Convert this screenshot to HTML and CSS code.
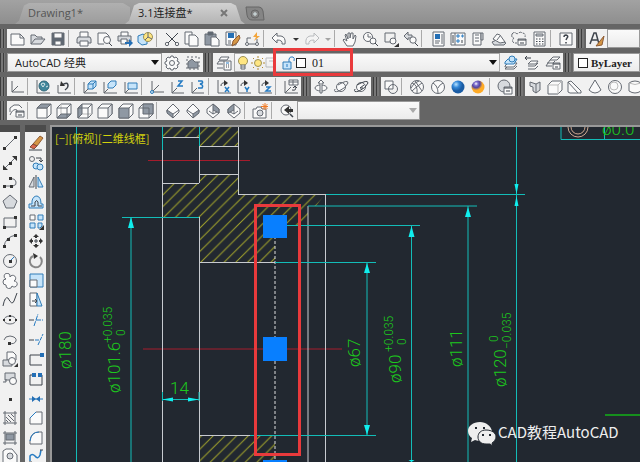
FILE: index.html
```html
<!DOCTYPE html>
<html lang="zh-CN">
<head>
<meta charset="utf-8">
<title>AutoCAD</title>
<link rel="stylesheet" href="styles.css">
</head>
<body>
<nav class="tabs">
<a class="tab" href="#drawing1">Drawing1*</a>
<a class="tab active" href="#plate"><span>3.1连接盘*</span><svg class="close" viewBox="0 0 8 8"><path d="M1 1l6 6M7 1l-6 6"/></svg></a>
<button class="add" aria-label="New tab"><svg viewBox="0 0 20 16"><path d="M1 1H14Q17 1 18 5L19 14H7Q3 14 2 9Z"/><circle cx="10" cy="8" r="4"/><path class="w" d="M10 6v4M8 8h4"/></svg></button>
</nav>
<header class="bars">
<div class="row">
<i class="grip"></i>
<div class="bar standard">
<button aria-label="New"><svg viewBox="0 0 16 16"><path class="p" d="M2 3H11L15 7V14H2Z"/><path d="M11 3V7H15"/></svg></button>
<button aria-label="Open"><svg viewBox="0 0 16 16"><path class="g" d="M1 13V4H5L7 6H12V8"/><path class="g" d="M1 13L5 8H15L11 13Z"/></svg></button>
<button aria-label="Save"><svg viewBox="0 0 16 16"><path class="d" d="M2 2H14V14H2Z"/><path class="p" d="M4 2H12V7H4Z"/><path class="p" d="M5 10H11V14H5Z"/></svg></button>
<i class="sep"></i>
<button aria-label="Plot"><svg viewBox="0 0 16 16"><path class="p" d="M4 6V1H12V6"/><path class="g" d="M2 6H14L15 8V12H1V8Z"/><path class="p" d="M4 10H12V15H4Z"/></svg></button>
<button aria-label="Preview"><svg viewBox="0 0 16 16"><path class="p" d="M7 13H1V2H9L12 5V7"/><circle class="p" cx="10" cy="9" r="3.5"/><path class="h" d="M12 12l3 3"/></svg></button>
<button aria-label="Publish"><svg viewBox="0 0 16 16"><path class="p" d="M4 5V1H11V5"/><path class="g" d="M1 5H14V10H1Z"/><path class="p" d="M4 8H10V13H4Z"/><path class="bf" d="M8 11h4V8l4 4-4 4v-3H8Z"/></svg></button>
<button aria-label="3D print"><svg viewBox="0 0 16 16"><path class="l" d="M1 5L6 3L10 6V13L5 14L1 11Z"/><circle class="y" cx="11" cy="6" r="4.5"/><path d="M11 1.500V6L15 8M11 6L8 9"/></svg></button>
<i class="sep"></i>
<button aria-label="Cut"><svg viewBox="0 0 16 16"><path class="h" d="M2 2L12 12M14 2L4 12"/><circle cx="3" cy="13" r="1.700"/><circle cx="13" cy="13" r="1.700"/></svg></button>
<button aria-label="Copy"><svg viewBox="0 0 16 16"><path class="p" d="M1 1H8V13H1Z"/><path class="p" d="M5 4H11L14 7V15H5Z"/></svg></button>
<button aria-label="Paste"><svg viewBox="0 0 16 16"><path class="m" d="M1 3H12V14H1Z"/><path class="d" d="M4 1H9V4H4Z"/><path class="p" d="M7 6H12L15 9V15H7Z"/></svg></button>
<button aria-label="Match properties"><svg viewBox="0 0 16 16"><path class="p" d="M1 1H11V14H1Z"/><path class="bf" d="M3 2H9V7H3Z"/><path d="M3 10H6M3 12H6"/><path class="o" d="M14 4L15 7L12 12L7 15L8 10Z"/></svg></button>
<button aria-label="Block editor"><svg viewBox="0 0 16 16"><path d="M2 7V13H12V8M2 7H6"/><circle class="p" cx="2" cy="13" r="1.500"/><circle class="p" cx="12" cy="13" r="1.500"/><path class="spark" d="M12 1L8 6H11L9 10L15 5H12Z"/></svg></button>
<i class="sep"></i>
<button aria-label="Undo"><svg viewBox="0 0 16 16"><path class="p" d="M1 7L6 2V5H10Q15 6 14 13H11Q12 9 6 9V12Z"/></svg></button>
<button class="drop" aria-label="Undo list"><svg viewBox="0 0 8 16"><path class="k" d="M1 7H7L4 10Z"/></svg></button>
<button class="off" aria-label="Redo"><svg viewBox="0 0 16 16"><path class="p" d="M15 7L10 2V5H6Q1 6 2 13H5Q4 9 10 9V12Z"/></svg></button>
<button class="drop off" aria-label="Redo list"><svg viewBox="0 0 8 16"><path class="k" d="M1 7H7L4 10Z"/></svg></button>
<i class="sep"></i>
<button aria-label="Pan"><svg viewBox="0 0 16 16"><path class="p" d="M5 15L1 9L2 8L5 10L3 4L4 3L6 8V2H8V7L9 2H11V8L13 4L14 5L13 11L11 15Z"/></svg></button>
<button aria-label="Zoom realtime"><svg viewBox="0 0 16 16"><circle class="p" cx="5" cy="6" r="4.500"/><path d="M5 3V6H8"/><circle class="p" cx="10" cy="10" r="3"/><path class="h" d="M12 12l3 3"/></svg></button>
<button aria-label="Zoom window"><svg viewBox="0 0 16 16"><path d="M2 2H12V11H2Z"/><circle class="p" cx="10" cy="10" r="3"/><path class="k" d="M16 12V16H11Z"/></svg></button>
<button aria-label="Zoom previous"><svg viewBox="0 0 16 16"><path class="g" d="M1 5L5 1V4H9V7H5V9Z"/><circle class="p" cx="10" cy="9" r="3.200"/><path class="h" d="M12 12l3 3"/></svg></button>
<i class="sep"></i>
<button aria-label="Properties"><svg viewBox="0 0 16 16"><path class="p" d="M3 1H14V15H3Z"/><path class="bf" d="M5 3H10V8H5Z"/><path d="M5 10H10M5 12H9M12 3V13"/></svg></button>
<button aria-label="DesignCenter"><svg viewBox="0 0 16 16"><path class="p" d="M1 2H15V14H1ZM5 2V14"/><path class="b" d="M7 4H9V6H7ZM12 4H13V6H12ZM7 9H9V11H7Z"/><path class="h" d="M3 4V12M12 9V12"/></svg></button>
<button aria-label="Tool palettes"><svg viewBox="0 0 16 16"><path class="p" d="M3 2H11V14H3Z"/><path class="g" d="M11 2H13V9H11Z"/><path d="M5 4H9M5 7H9M5 10H9"/></svg></button>
<button aria-label="Sheet set"><svg viewBox="0 0 16 16"><path class="g" d="M1 11L8 8L15 12L13 14H3Z"/><path class="p" d="M2 8L6 3L9 4L14 11L9 12Z"/><path d="M9 5L6 9"/></svg></button>
<button aria-label="Markup set"><svg viewBox="0 0 16 16"><path stroke-dasharray="3 1" d="M1 3Q3 0 6 3Q10 0 11 2Q15 2 14 6M1 3Q0 7 3 7Q0 10 3 12H6"/><path class="p" d="M7 8H15V14H7Z"/><path class="h" d="M7 9H15M9 12H13"/></svg></button>
<button aria-label="Calculator"><svg viewBox="0 0 16 16"><path class="p" d="M3 1H14V15H3Z"/><path class="g" d="M5 3H12V5H5Z"/><path class="h" stroke-dasharray="1.500 1.500" d="M5 8H13M5 10.500H13M5 13H13"/></svg></button>
<i class="sep"></i>
<button aria-label="Help"><svg viewBox="0 0 16 16"><path class="p" d="M2 2H14V14H2Z"/><path class="h thick" d="M6 6Q6 4 8 4Q11 5 9 7L8 9M8 11V12.500"/></svg></button>
</div>
<i class="grip"></i>
<div class="bar one"><button aria-label="Text style"><svg viewBox="0 0 16 16"><path class="h thick" d="M1 13L5 2H7L10 13M3 9H9"/><path class="o" d="M15 5L11 10L7 15L13 14Z"/></svg></button></div>
<select class="field grow" aria-label="Text style name"><option></option></select>
</div>

<div class="row">
<i class="grip"></i>
<div class="bar workspace">
<div class="combo"><select aria-label="Workspace"><option>AutoCAD 经典</option></select><svg class="arrow" viewBox="0 0 8 5"><path d="M0 0H8L4 5Z"/></svg></div>
<button aria-label="Workspace settings"><svg viewBox="0 0 16 16"><path class="p" d="M7 1H9L10 3L12 2L14 4L13 6L15 7V9L13 10L14 12L12 14L10 13L9 15H7L6 13L4 14L2 12L3 10L1 9V7L3 6L2 4L4 2L6 3Z"/><circle cx="8" cy="8" r="2.500"/></svg></button>
<button aria-label="My workspace"><svg viewBox="0 0 16 16"><path stroke-dasharray="2 2" d="M2 2H14V14H2Z"/><path class="m" d="M3 13V7L7 4L10 7H13V13Z"/></svg></button>
</div>
<i class="grip"></i>
<div class="bar layers">
<button aria-label="Layer properties"><svg viewBox="0 0 16 16"><path class="p" d="M5 2H13L11 5H3ZM3 6H8M1 9H7M1 13H7M3 6L1 9"/><path class="p" d="M8 6H15V15H8Z"/><path class="b" d="M10 8H13"/><path class="h" stroke-dasharray="1 1" d="M10 10H14M10 12H14"/></svg></button>
<div class="combo layer">
<svg viewBox="0 0 16 16"><circle class="y" cx="8" cy="6" r="4.500"/><path class="p" d="M6 10H10V14H6ZM6 12H10"/></svg>
<svg viewBox="0 0 16 16"><circle class="y" cx="8" cy="8" r="3.500"/><path class="gold" d="M8 1V3M8 13V15M1 8H3M13 8H15M3 3L4 4M12 12L13 13M3 13L4 12M12 4L13 3"/></svg>
<svg class="off half" viewBox="0 0 8 16"><path d="M8 3H1V12H8M4 6H8"/></svg>
<svg viewBox="0 0 16 16"><path class="l" d="M2 7H10V14H2Z"/><path class="b" d="M8 7V4Q9 1 12 2Q14 3 13 6M6 9V12"/></svg>
<b class="swatch"></b>
<select class="serif" aria-label="Layer"><option>01</option></select><svg class="arrow" viewBox="0 0 8 5"><path d="M0 0H8L4 5Z"/></svg>
<span class="mark"></span>
</div>
<button aria-label="Make current"><svg viewBox="0 0 16 16"><path class="p" d="M2 11L5 8H14L11 12H2ZM2 14L4 12M2 14H11L14 11"/><path class="l" d="M2 7L5 4H14L11 9H2Z"/><circle class="l" cx="9" cy="4" r="3"/></svg></button>
<button aria-label="Layer previous"><svg viewBox="0 0 16 16"><path class="p" d="M5 8L7 6H14L12 9H4ZM4 11H11L14 8M4 14H11L14 11"/><path class="h" d="M1 3H7M3 1L1 3L3 5"/></svg></button>
<button aria-label="Layer states"><svg viewBox="0 0 16 16"><path class="p" d="M5 5L8 2H15L12 5ZM2 8H8L10 6M1 11H7M5 5L1 11"/><path class="p" d="M8 8H15V14H8Z"/><path class="h" d="M8 9H15M10 12H13"/></svg></button>
</div>
<i class="grip"></i>
<div class="combo grow color"><b class="swatch"></b><select class="serif bold" aria-label="Color"><option>ByLayer</option></select></div>
</div>

<div class="row">
<i class="grip"></i>
<div class="bar ucs">
<button aria-label="UCS"><svg viewBox="0 0 16 16"><path class="a" d="M3 2V13H15M3 13L9 7"/></svg></button>
<i class="sep"></i>
<button aria-label="World"><svg viewBox="0 0 16 16"><path class="a" d="M2 1V14H15"/><circle class="globe" cx="9" cy="7" r="5"/><path class="w" d="M6 5Q8 3 10 5L8 8ZM11 8L13 7"/></svg></button>
<button aria-label="UCS previous"><svg viewBox="0 0 16 16"><path class="a" d="M2 6V14H15"/><path class="h thick" d="M6 6Q12 2 12 7Q12 9 9 11"/><path class="k" d="M4 7L5 2L9 7Z"/></svg></button>
<i class="sep"></i>
<button aria-label="Face UCS"><svg viewBox="0 0 16 16"><path class="a" d="M2 3V14H15M2 14L6 10"/><path class="l" d="M6 5L9 2H14V7L11 10H6ZM6 5H11V10M11 5L14 2"/></svg></button>
<button aria-label="Object UCS"><svg viewBox="0 0 16 16"><path class="a" d="M2 3V14H15M2 14L6 10"/><path class="l" d="M6 5L9 2H14V6L11 9H6Z"/></svg></button>
<button aria-label="View UCS"><svg viewBox="0 0 16 16"><path class="a" d="M2 3V14H15M2 14L6 10"/><path class="l" d="M5 4H14V10H5Z"/></svg></button>
<i class="sep"></i>
<button aria-label="Origin"><svg viewBox="0 0 16 16"><path class="a" d="M3 2V13H15M3 13L10 6"/><circle class="l" cx="3" cy="13" r="1.500"/></svg></button>
<button aria-label="Z axis"><svg viewBox="0 0 16 16"><path class="a" d="M3 3V14H15M3 14L8 9"/><path class="b thick" d="M9 2H13L9 7H14"/></svg></button>
<button aria-label="3 point"><svg viewBox="0 0 16 16"><path class="a" d="M2 3V14H14M2 14L7 9"/><path class="b thick" d="M8 2H12Q14 4 10 5Q14 6 12 9H8"/></svg></button>
<i class="sep"></i>
<button aria-label="Rotate X"><svg viewBox="0 0 16 16"><path class="a" d="M2 1V14H15"/><path class="h" d="M5 7Q5 3 10 4"/><path class="k" d="M8 1L12 4L8 7Z"/><path class="b thick" d="M9 8L13 13M13 8L9 13"/></svg></button>
<button aria-label="Rotate Y"><svg viewBox="0 0 16 16"><path class="a" d="M2 1V14H15"/><path class="h" d="M5 7Q5 3 10 4"/><path class="k" d="M8 1L12 4L8 7Z"/><path class="b thick" d="M9 8L11 11L13 8M11 11V13"/></svg></button>
<button aria-label="Rotate Z"><svg viewBox="0 0 16 16"><path class="a" d="M2 1V14H15"/><path class="h" d="M5 7Q5 3 10 4"/><path class="k" d="M8 1L12 4L8 7Z"/><path class="b thick" d="M9 8H13L9 12H14"/></svg></button>
<i class="sep"></i>
<button aria-label="Apply"><svg viewBox="0 0 16 16"><path class="a" d="M2 2V14H15M2 14L8 8"/><path class="p" d="M6 1H15V6H6ZM10 1V6M6 3H15"/><path class="h" d="M9 11Q14 12 12 8M10 9L12 7L14 9"/></svg></button>
</div>
<i class="grip"></i>
<div class="bar orbit">
<button aria-label="Constrained orbit"><svg viewBox="0 0 16 16"><ellipse class="p" cx="8" cy="9" rx="6" ry="3"/><path class="p" d="M7 14V4H5L8 1L11 4H9V14Z"/></svg></button>
<button aria-label="Free orbit"><svg viewBox="0 0 16 16"><circle class="p" cx="8" cy="8" r="4.500"/><path d="M5 6Q15 0 15 4Q13 9 6 12Q0 14 2 10"/></svg></button>
<button aria-label="Continuous orbit"><svg viewBox="0 0 16 16"><circle class="p" cx="8" cy="8" r="4.500"/><path class="h" d="M4 6Q15 0 15 4Q13 9 6 12Q0 14 2 10M7 9L11 6M7 9h3"/></svg></button>
</div>
<i class="grip"></i>
<div class="bar styles">
<button aria-label="2D wireframe"><svg viewBox="0 0 16 16"><path class="p" d="M2 2H10V10H2Z"/><circle cx="10" cy="10" r="4.500"/></svg></button>
<i class="sep"></i>
<button aria-label="3D wireframe"><svg viewBox="0 0 16 16"><circle class="p" cx="8" cy="8" r="6.500"/><path d="M3 4Q9 6 8 14M13 4Q8 7 3 12M2 9Q5 3 10 2M13 12Q9 6 6 2"/></svg></button>
<button aria-label="3D hidden"><svg viewBox="0 0 16 16"><circle class="p" cx="8" cy="8" r="6.500"/><path d="M3 4Q8 7 8 14M13 4Q9 6 8 9"/></svg></button>
<button aria-label="Realistic"><svg viewBox="0 0 16 16"><defs><radialGradient id="blue" cx=".35" cy=".3"><stop offset="0" stop-color="#b7e2ff"/><stop offset=".5" stop-color="#3387d8"/><stop offset="1" stop-color="#1a5ca4"/></radialGradient><radialGradient id="sunset" cx=".35" cy=".25"><stop offset="0" stop-color="#fff"/><stop offset=".3" stop-color="#8070cf"/><stop offset=".6" stop-color="#5346a0"/><stop offset="1" stop-color="#ffab26"/></radialGradient></defs><circle class="ball" cx="8" cy="8" r="6.500" fill="url(#blue)"/></svg></button>
<button aria-label="Conceptual"><svg viewBox="0 0 16 16"><circle class="ball" cx="8" cy="8" r="6.500" fill="url(#sunset)"/></svg></button>
<i class="sep"></i>
<button aria-label="Manage visual styles"><svg viewBox="0 0 16 16"><circle class="g" cx="7" cy="7" r="6"/><path class="p" d="M7 8H15V15H7Z"/><path class="h" d="M7 9H15M9 12H13"/></svg></button>
</div>
<i class="grip"></i>
<div class="bar solids">
<button aria-label="Polysolid"><svg viewBox="0 0 16 16"><path class="g" d="M3 3L9 5V14L6 12V8L3 7ZM9 5L13 3V11L9 14"/></svg></button>
<button aria-label="Box"><svg viewBox="0 0 16 16"><path class="p" d="M1 6L5 2H15V11L11 15H1Z"/><path class="lt" d="M1 6H11V15M11 6L15 2"/></svg></button>
<button aria-label="Wedge"><svg viewBox="0 0 16 16"><path class="p" d="M1 13V3L4 2L14 12V14H3Z"/><path d="M1 3L11 14"/></svg></button>
<button aria-label="Cone"><svg viewBox="0 0 16 16"><path class="p" d="M8 1L14 11Q8 17 2 11Z"/></svg></button>
<button aria-label="Sphere"><svg viewBox="0 0 16 16"><circle class="p" cx="8" cy="8" r="6.500"/><circle class="lt" cx="7" cy="7" r="4"/></svg></button>
<button aria-label="Cylinder"><svg viewBox="0 0 16 16"><path class="p" d="M2 4Q8 0 14 4V12Q8 16 2 12Z"/><path class="lt" d="M2 4Q8 7 14 4"/></svg></button>
</div>
</div>

<div class="row">
<i class="grip"></i>
<div class="bar views">
<button aria-label="Named views"><svg viewBox="0 0 16 16"><path class="p" d="M1 9V5L5 2H10L13 5M1 12Q4 5 8 7V12"/><path class="p" d="M7 8H15V14H7Z"/><path class="h" d="M7 9H15M9 12H13"/></svg></button>
<i class="sep"></i>
<button aria-label="Top"><svg viewBox="0 0 16 16"><path class="p" d="M1 5H11V15H1ZM11 5L15 1V11L11 15"/><path class="m" d="M1 5L5 1H15L11 5Z"/></svg></button>
<button aria-label="Bottom"><svg viewBox="0 0 16 16"><path class="p" d="M1 5L5 1H15V11L11 15H1Z"/><path class="lt" d="M5 1V11"/><path class="m" d="M1 15L5 11H15L11 15Z"/><path d="M1 5H11V15M11 5L15 1"/></svg></button>
<button aria-label="Left"><svg viewBox="0 0 16 16"><path class="p" d="M1 5L5 1H15V11L11 15H1Z"/><path class="lt" d="M5 11H15"/><path class="m" d="M1 5L5 1V11L1 15Z"/><path d="M1 5H11V15M11 5L15 1"/></svg></button>
<button aria-label="Right"><svg viewBox="0 0 16 16"><path class="p" d="M1 5L5 1H15V11L11 15H1ZM1 5H11"/><path class="g" d="M11 5L15 1V11L11 15Z"/></svg></button>
<button aria-label="Front"><svg viewBox="0 0 16 16"><path class="p" d="M1 5L5 1H15V11L11 15H1Z"/><path d="M11 5L15 1"/><path class="m" d="M1 5H11V15H1Z"/></svg></button>
<button aria-label="Back"><svg viewBox="0 0 16 16"><path class="p" d="M1 5L5 1H15V11L11 15H1Z"/><path class="m" d="M5 1H15V11H5Z"/><path d="M1 5H11V15"/></svg></button>
<i class="sep"></i>
<button aria-label="SW isometric"><svg viewBox="0 0 16 16"><path class="p" d="M2 7L8 1L14 7V9L8 15L2 9Z"/><path class="m" d="M2 7L8 11V15L2 10Z"/><path d="M8 11L14 7"/></svg></button>
<button aria-label="SE isometric"><svg viewBox="0 0 16 16"><path class="p" d="M2 7L8 1L14 7V9L8 15L2 9Z"/><path class="m" d="M14 7L8 11V15L14 10Z"/><path d="M8 11L2 7"/></svg></button>
<button aria-label="NE isometric"><svg viewBox="0 0 16 16"><path class="p" d="M2 6L8 1L14 6V10L8 15L2 10Z"/><path class="m" d="M8 1L14 6V10L8 7Z"/><path d="M8 7V11L4 8M8 11L12 9"/></svg></button>
<button aria-label="NW isometric"><svg viewBox="0 0 16 16"><path class="p" d="M2 6L8 1L14 6V10L8 15L2 10Z"/><path class="m" d="M8 1L2 6V10L8 7Z"/><path d="M8 7V11L12 8M8 11L4 9"/></svg></button>
<i class="sep"></i>
<button aria-label="Create camera"><svg viewBox="0 0 16 16"><path class="p" d="M1 6H4L5 4H9L10 6H14V15H1Z"/><circle class="g" cx="8" cy="10" r="3"/><path class="orange" d="M13 0V7M9 3.500H16M10.500 1L15.500 6M15.500 1L10.500 6"/></svg></button>
<i class="sep"></i>
<button aria-label="Zoom back"><svg viewBox="0 0 16 16"><circle class="p" cx="7" cy="7" r="5"/><path class="h thick" d="M11 11l3 3"/><path class="k" d="M5 7L10 3V6H14V9H10V11Z"/></svg></button>
</div>
<div class="combo named"><select disabled aria-label="View"><option></option></select><svg class="arrow" viewBox="0 0 8 5"><path d="M0 0H8L4 5Z"/></svg></div>
</div>
</header>

<main>
<aside class="tools">
<button aria-label="Line"><svg viewBox="0 0 16 16"><path d="M2 14L14 2"/><path class="k" d="M1 12h3v3H1zM12 1h3v3h-3z"/></svg></button>
<button aria-label="Construction line"><svg viewBox="0 0 16 16"><path d="M2 14L14 2"/><path class="k" d="M1 15V10L6 15ZM15 1V6L10 1ZM7 7h3v3H7z"/></svg></button>
<button aria-label="Polyline"><svg viewBox="0 0 16 16"><path d="M2 12H11Q15 11 14 8Q13 4 8 5"/><path class="k" d="M1 11h3v3H1zM8 11h3v3H8zM7 3h3v3H7z"/></svg></button>
<button aria-label="Polygon"><svg viewBox="0 0 16 16"><path class="g" d="M8 1L15 7L12 14H4L1 7Z"/></svg></button>
<button aria-label="Rectangle"><svg viewBox="0 0 16 16"><path d="M2 4H14V13H2Z"/><path class="k" d="M1 12h3v3H1zM12 2h3v3h-3z"/></svg></button>
<button aria-label="Arc"><svg viewBox="0 0 16 16"><path d="M2 14Q3 4 14 2"/><path class="k" d="M1 12h3v3H1zM5 5h3v3H5zM12 1h3v3h-3z"/></svg></button>
<button aria-label="Circle"><svg viewBox="0 0 16 16"><circle cx="8" cy="8" r="6.500"/><path class="b" d="M8 8L12 4"/><path class="k" d="M7 7h3v3H7z"/></svg></button>
<button aria-label="Revision cloud"><svg viewBox="0 0 16 16"><path class="p" d="M4 6A3 3 0 1 1 8 4A3 3 0 1 1 12 8A3 3 0 1 1 10 13A3 3 0 1 1 4 12A3 3 0 1 1 4 6Z"/></svg></button>
<button aria-label="Spline"><svg viewBox="0 0 16 16"><path class="h" d="M1 14Q3 4 6 6Q10 14 12 9L15 1"/></svg></button>
<button aria-label="Ellipse"><svg viewBox="0 0 16 16"><ellipse cx="8" cy="8" rx="6" ry="4"/><path class="k" d="M7 7h2v2H7zM1 7h2v2H1zM7 3h2v2H7zM13 7h2v2h-2z"/></svg></button>
<button aria-label="Ellipse arc"><svg viewBox="0 0 16 16"><path d="M2 8Q3 4 8 4Q15 5 14 9Q12 13 7 11"/><path class="k" d="M6 10h3v3H6z"/></svg></button>
<button aria-label="Insert block"><svg viewBox="0 0 16 16"><path class="p" d="M5 1H11L14 4V9H5Z"/><path class="g" d="M1 9H10V15H1Z"/><circle class="p" cx="10" cy="10" r="3.500"/><path class="k" d="M16 12V16H12Z"/></svg></button>
<button aria-label="Make block"><svg viewBox="0 0 16 16"><path class="g" d="M3 2H13V9H3ZM1 11H4V8"/><circle class="p" cx="11" cy="10" r="3.500"/></svg></button>
<button aria-label="Point"><svg viewBox="0 0 16 16"><path class="k" d="M7 7h3v3H7z"/></svg></button>
<button aria-label="Hatch"><svg viewBox="0 0 16 16"><path d="M3 1V15M13 1V15M1 3H15M1 13H15"/><path d="M4 7L9 12M6 5L12 11M4 10L6 12M9 4L12 7"/></svg></button>
<button aria-label="Gradient"><svg viewBox="0 0 16 16"><path class="m" d="M4 4H12V10H4Z"/><path d="M3 1V15M13 1V15M1 3H15M1 13H15"/></svg></button>
<button aria-label="Region"><svg viewBox="0 0 16 16"><path class="p" d="M1 15V3L4 1H10L15 7V15"/><circle class="g" cx="8" cy="8" r="3"/></svg></button>
</aside>
<aside class="tools modify">
<button aria-label="Erase"><svg viewBox="0 0 16 16"><path class="o" d="M5 9L12 1L15 3L9 11Z"/><path class="redf" d="M2 12L5 9L9 11L6 14Z"/><path class="h" d="M1 15H14"/></svg></button>
<button aria-label="Copy object"><svg viewBox="0 0 16 16"><circle cx="4" cy="4" r="2.500"/><path class="h" d="M8 3H13V6M11 5L13 7L15 5"/><circle class="l" cx="8" cy="11" r="3"/><circle class="l" cx="12" cy="12" r="3"/></svg></button>
<button aria-label="Mirror"><svg viewBox="0 0 16 16"><path class="g" d="M6 3V13H1Z"/><path class="h" d="M8 1V15"/><path class="l" d="M10 3V13H15Z"/></svg></button>
<button aria-label="Offset"><svg viewBox="0 0 16 16"><path class="l" d="M1 14V10H4V7Q5 2 9 2Q13 3 13 10H15V14Z"/><path class="h" d="M3 12H7V8Q9 5 10 8V12H14"/></svg></button>
<button aria-label="Array"><svg viewBox="0 0 16 16"><path class="p" d="M2 1H7V6H2Z"/><path class="l" d="M10 1H15V6H10ZM2 9H7V14H2ZM10 9H14V12L12 14H10Z"/><path class="k" d="M16 11V16H11Z"/></svg></button>
<button aria-label="Move"><svg viewBox="0 0 16 16"><path class="k" d="M8 1L11 4H9V5H7V4H5ZM8 15L5 12H7V11H9V12H11ZM1 8L4 5V7H5V9H4V11ZM15 8L12 11V9H11V7H12V5Z"/><path class="h" d="M7 7H9V9H7Z"/></svg></button>
<button aria-label="Rotate"><svg viewBox="0 0 16 16"><path d="M12 4A6 6 0 1 1 5 3" class="m2"/><path class="k" d="M5 0L10 3L6 6Z"/></svg></button>
<button aria-label="Scale"><svg viewBox="0 0 16 16"><path class="l" d="M2 1H15V14H2Z"/><path class="p" d="M2 7H9V14H2Z"/></svg></button>
<button aria-label="Stretch"><svg viewBox="0 0 16 16"><path class="p" d="M2 1H9V14H2Z"/><path class="l" d="M9 1L14 14H9Z"/><path class="h" d="M4 9H9M7 7L9 9L7 11"/></svg></button>
<button aria-label="Trim"><svg viewBox="0 0 16 16"><path class="b" d="M6 14L10 2M8 8H15" stroke-dasharray="5 1"/><path class="h" d="M1 8H6"/></svg></button>
<button aria-label="Extend"><svg viewBox="0 0 16 16"><path class="b" d="M10 13L15 2M7 8H11" stroke-dasharray="4 1"/><path class="h" d="M1 8H6"/></svg></button>
<button aria-label="Break at point"><svg viewBox="0 0 16 16"><path class="h" d="M14 4H2V14H14"/><path class="bf" d="M12 2h4v4h-4z"/></svg></button>
<button aria-label="Break"><svg viewBox="0 0 16 16"><path class="h" d="M4 4H2V14H14V4H12"/><path class="bf" d="M4 2h4v4H4zM10 2h4v4h-4z"/></svg></button>
<button aria-label="Join"><svg viewBox="0 0 16 16"><path class="b" d="M1 8H15"/><path class="bf" d="M4 5L8 8L4 11ZM12 5L8 8L12 11Z"/></svg></button>
<button aria-label="Chamfer"><svg viewBox="0 0 16 16"><path class="p" d="M2 14V8L8 2H14V14Z"/><path class="b" d="M2 8L8 2"/></svg></button>
<button aria-label="Fillet"><svg viewBox="0 0 16 16"><path class="p" d="M2 14V11Q3 2 11 2H14V14Z"/><path class="b" d="M2 11Q3 2 11 2"/></svg></button>
<button aria-label="Blend curves"><svg viewBox="0 0 16 16"><path class="b thick" d="M2 13V8Q4 5 7 8Q10 12 12 7L13 2"/><path class="h" d="M1 14H4M12 2H15"/></svg></button>
</aside>
<section class="canvas">
<svg viewBox="52 127 588 335" preserveAspectRatio="xMinYMin slice">
<defs>
<pattern id="hatch" patternUnits="userSpaceOnUse" x="201" y="262" width="11.700" height="11.700"><path class="hatchline" d="M-1 1L1 -1M-1 12.700L12.700 -1M10.700 12.700L12.700 10.700"/></pattern>
<pattern id="hatchlow" patternUnits="userSpaceOnUse" x="213" y="436" width="11.700" height="11.700"><path class="hatchline" d="M-1 1L1 -1M-1 12.700L12.700 -1M10.700 12.700L12.700 10.700"/></pattern>
</defs>
<path fill="url(#hatch)" stroke="none" d="M162 127H199V137H162ZM199 127H238V146H199ZM162 183H199V174H238V194H325L316 206H308V217L299 226H275V262H199V217H162Z"/>
<path fill="url(#hatchlow)" stroke="none" d="M199 436H275V462H199Z"/>
<path class="red" d="M148 160.500H250M143 349H342"/>
<path class="white" d="M162.500 127V462M199.500 127V183M199.500 217V462M238.500 127V194M325.500 194V462M308 206V462M162 137.500H199M199 146.500H238M199 174.500H238M162 183.500H199M238 194.500H326M199 262.500H275M199 435.500H275"/>
<path class="dash" d="M275 226V462"/>
<path class="cyan" d="M76.500 127V462M122 217.500H199M131 217V462M162.500 127V150M199.500 127V146M326 194.500H525M308 206H477M275 225.500H420M275 262.500H376M250 435.500H376M367 262V435M411.500 226V462M468 206V462M516.500 127V462M162.500 392V401M199 392V401M162 399.500H199M561 127V139.500H640M604.500 127V139.500"/>
<path class="tip" d="M131 217l3 11h-6zM367 263l3 10h-6zM367 435l3-10h-6zM411.500 226l3 11h-6zM468 207l3 10h-6zM516.500 194l2-10h-4zM516.500 196l2 10h-4zM162 399.500l11-2v4zM199 399.500l-11-2v4zM411.500 462l-3-2h6z"/>
<path class="green" d="M605 415H640"/>
<g class="ring"><circle cx="578" cy="127" r="10"/><circle cx="578" cy="127" r="7"/></g>
<g class="dim">
<text x="602" y="135">ø0.0</text>
<text x="170" y="394">14</text>
<text transform="translate(71 369) rotate(-90)">ø180</text>
<text transform="translate(120 393) rotate(-90)">ø101.6</text>
<text transform="translate(360 367) rotate(-90)">ø67</text>
<text transform="translate(401 383) rotate(-90)">ø90</text>
<text transform="translate(462 367) rotate(-90)">ø111</text>
<text transform="translate(506 387) rotate(-90)">ø120</text>
<g class="tol">
<text transform="translate(112 343) rotate(-90)">+0.035</text>
<text transform="translate(125 336) rotate(-90)">0</text>
<text transform="translate(393 352) rotate(-90)">+0.035</text>
<text transform="translate(406 345) rotate(-90)">0</text>
<text transform="translate(498 342) rotate(-90)">0</text>
<text transform="translate(511 349) rotate(-90)">−0.035</text>
</g>
</g>
<text class="view" x="55" y="143">[−][俯视][二维线框]</text>
<path class="handle" d="M263 215h24v23h-24zM263 337h24v24h-24zM263 460h24v4h-24z"/>
<rect class="redbox" x="255.500" y="205.500" width="44" height="249"/>
<g class="wechat"><path d="M480 422c-7 0-12 4-12 9 0 3 2 6 4 7l-1 4 4-2c2 1 6 1 8 0 0-6 4-9 9-9-1-5-6-9-12-9z"/><path d="M486 430c-5 0-8 3-8 7s3 7 8 7l4 0 3 2-1-3c2-1 4-4 4-6 0-4-4-7-10-7z" stroke="#222830"/><path class="eye" d="M475 427h2v2h-2zM483 427h2v2h-2zM482 434h2v2h-2zM489 434h2v2h-2z"/></g>
<text class="brand" x="498" y="438">CAD教程AutoCAD</text>
</svg>
</section>
</main>
</body>
</html>
```
FILE: styles.css
```css
* { box-sizing: border-box; }

body {
  margin: 0;
  height: 100vh;
  display: flex;
  flex-direction: column;
  overflow: hidden;
  background: #656565;
  font: 11px/16px "Open Sans", "Noto Sans CJK SC", sans-serif;
  color: #222;
}

button {
  border: 0;
  padding: 0;
  background: none;
  display: flex;
  align-items: center;
  justify-content: center;
  min-width: 0;
}

svg {
  fill: none;
  stroke: #656a72;
  stroke-width: 1;
  flex: none;
}

/* document tabs */
.tabs {
  flex: none;
  height: 24px;
  display: flex;
  align-items: flex-end;
  padding-left: 15px;
  background: linear-gradient(#a2a2a2, #8e8e8e);
}
.tab {
  width: 115px;
  height: 21px;
  padding: 2px 13px;
  color: #555;
  text-decoration: none;
  background: linear-gradient(#b0b0b0, #9c9c9c);
  clip-path: polygon(0 100%, 4px 85%, 9px 12%, 14px 0, 108px 0, 100% 20%, 100% 100%);
}
.tab.active {
  width: 120px;
  margin-left: -5px;
  display: flex;
  justify-content: space-between;
  align-items: center;
  padding: 0 17px 2px 13px;
  color: #222;
  background: linear-gradient(#d2d2d2, #b4b4b4);
  clip-path: polygon(0 100%, 4px 85%, 9px 12%, 14px 0, 106px 0, 111px 12%, 116px 85%, 100% 100%);
}
.close { width: 8px; height: 8px; stroke: #777; stroke-width: 2; }
.add { height: 21px; }
.add svg { width: 20px; height: 16px; stroke: #666; fill: #858585; }

/* toolbars */
.bars {
  flex: none;
  display: flex;
  flex-direction: column;
  gap: 5px;
  padding: 5px 0;
}
.row { display: flex; height: 19px; }
.bar { display: flex; background: #f1f1f1; flex: none; }
.bar > button { flex: 1; }
.bar > .drop { flex: 0 0 12px; }
.bar svg, .layer svg { width: 16px; height: 16px; }
.bar .drop svg, .layer .half { width: 8px; }
.bar .arrow, .arrow { width: 8px; height: 5px; fill: #111; stroke: none; }
.off { opacity: .4; }
.grip {
  flex: 0 0 10px;
  border: solid #656565;
  border-width: 0 2px;
  background: repeating-linear-gradient(90deg, #3d3d3d 0 1px, #777 1px 3px);
}
.row > .grip:first-child { flex-basis: 7px; border-left-width: 0; }
.sep { flex: 0 0 6px; border-left: 1px solid #aaa; margin: 1px 0; }
.standard { width: 569px; }
.one { width: 21px; }
.workspace { width: 196px; }
.layers { width: 350px; }
.ucs { width: 294px; }
.orbit { width: 60px; }
.styles { width: 134px; }
.solids { flex: 1; }
.bar.solids > button { flex: 0 0 20px; }
.views { width: 290px; }
.named { width: 123px; }
.grow { flex: 1; }

.field, .combo { border: 1px solid #999; background: linear-gradient(#fafafa, #ececec); min-width: 0; }
.field { appearance: none; border-radius: 0; }
.combo { display: flex; align-items: center; padding-right: 2px; position: relative; }
.workspace .combo { flex: 0 0 155px; padding-left: 7px; }
.bar.layers > button, .bar.workspace > button { flex: 1; }
.combo.layer { flex: 0 0 266px; border-color: #aaa; }
.combo.layer > svg { margin-right: -1px; }
.combo.layer > .arrow { margin-right: 0; }
.combo.layer > .half { margin: 0 8px 0 0; }
select {
  appearance: none;
  border: 0;
  border-radius: 0;
  padding: 0;
  background: none;
  font: inherit;
  color: #222;
  flex: 1;
  min-width: 0;
}
.swatch { width: 10px; height: 10px; border: 1px solid #222; background: #fff; margin: 0 6px 0 0; flex: none; }
.serif { font-family: "Liberation Serif", serif; font-size: 12px; }
.bold { font-size: 11px; font-weight: bold; }
.color { padding-left: 4px; }
.color .swatch { margin-right: 3px; }
.named .arrow { fill: #aaa; }
.mark {
  position: absolute;
  left: 38px;
  top: -6px;
  width: 80px;
  height: 28px;
  border: 3px solid #e93a3c;
}

/* icon paints */
.p { fill: #fafafa; }
.g { fill: #d7dade; }
.m { fill: #8f98a3; }
.d { fill: #5f6873; }
.k { fill: #333; stroke: none; }
.h { stroke: #3e444c; }
.a { stroke: #60656b; }
.b { stroke: #267bc2; }
.l { fill: #c6e4fa; stroke: #307db8; }
.bf { fill: #246fb5; stroke: none; }
.y { fill: #ffe682; stroke: #9d9155; }
.gold { stroke: #b28a33; }
.o { fill: #d49645; stroke: #8e5b34; }
.spark { fill: #f3a53b; stroke: none; }
.orange { stroke: #f17a25; }
.redf { fill: #d9674d; stroke: #814b3b; }
.lt { stroke: #bbb; }
.w { stroke: #d8e7e9; }
.globe { fill: #40869b; stroke: #316779; }
.ball { stroke: none; }
.thick { stroke-width: 1.5; }
.m2 { stroke: #888; stroke-width: 2; }

/* work area */
main { flex: 1; min-height: 0; display: flex; }
.tools {
  flex: 0 0 20px;
  display: flex;
  flex-direction: column;
  background: linear-gradient(#4b4b4b 7px, #f1f1f1 7px);
  padding-top: 8px;
}
.modify { margin: 0 4px 0 5px; flex-basis: 21px; }
.tools button { flex: 1 1 0; min-height: 0; }
.tools button:last-child { flex: 0 0 14px; align-items: flex-start; }
.tools svg { width: 16px; height: 16px; }
.canvas { flex: 1; min-width: 0; background: #222830; border: solid #999; border-width: 2px 0 0 2px; overflow: hidden; }
.canvas > svg { display: block; width: 100%; height: 100%; }
.hatchline { stroke: #a3a42b; }
.white { stroke: #c8cbd0; }
.cyan { stroke: #13bdb8; }
.tip { fill: #10eeee; stroke: none; }
.red { stroke: #a51c2c; }
.green { stroke: #168f1d; stroke-width: 2; }
.ring { stroke: #cfaa92; }
.dash { stroke: #ddd; stroke-dasharray: 3 2; }
.handle { fill: #087fff; stroke: none; }
.redbox { stroke: #e93a3c; stroke-width: 3; }
.dim { fill: #1dc81d; stroke: none; font: 300 17px Roboto, "Liberation Sans", sans-serif; }
.tol { font-size: 12px; }
.view { fill: #d2d20c; stroke: none; font: 11px "Noto Sans CJK SC", sans-serif; }
.wechat { fill: #eee; stroke: none; }
.wechat .eye { fill: #222830; }
.brand { fill: #eee; stroke: none; font: 15px "Noto Sans CJK SC", sans-serif; }
```
